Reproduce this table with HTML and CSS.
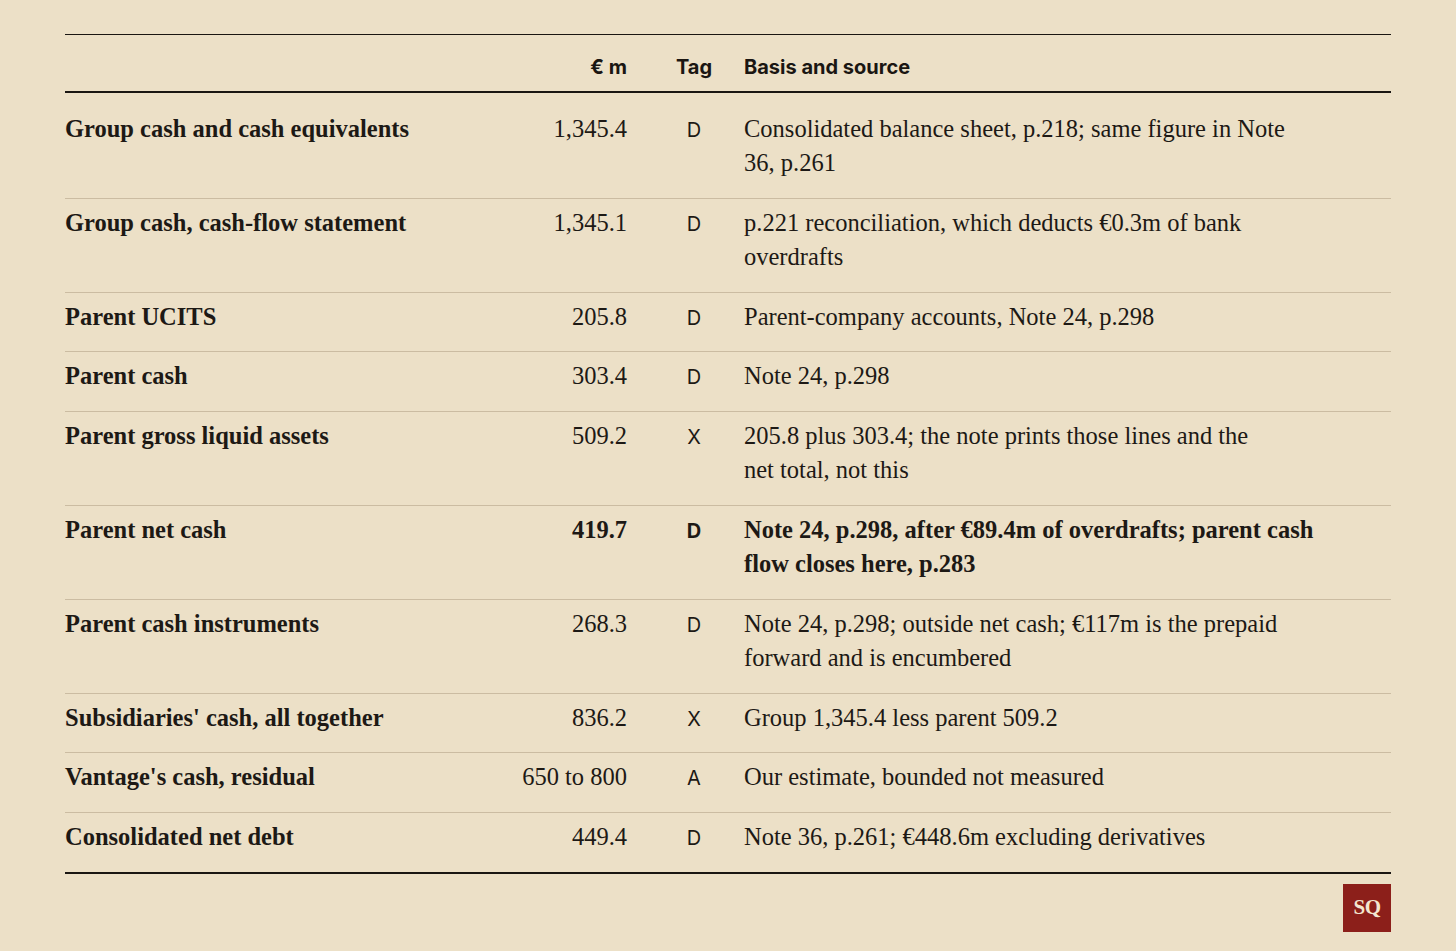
FILE: index.html
```html
<!DOCTYPE html>
<html lang="en">
<head>
<meta charset="utf-8">
<title>Cash ledger</title>
<link rel="stylesheet" href="styles.css">
</head>
<body>
<div class="page">
  <table class="ledger">
    <colgroup>
      <col class="c-label">
      <col class="c-amt">
      <col class="c-tag">
      <col class="c-basis">
    </colgroup>
    <thead>
      <tr>
        <th class="label"></th>
        <th class="amt">€ m</th>
        <th class="tag">Tag</th>
        <th class="basis">Basis and source</th>
      </tr>
    </thead>
    <tbody>
      <tr>
        <td class="label">Group cash and cash equivalents</td>
        <td class="amt">1,345.4</td>
        <td class="tag">D</td>
        <td class="basis">Consolidated balance sheet, p.218; same figure in Note<br>36, p.261</td>
      </tr>
      <tr>
        <td class="label">Group cash, cash-flow statement</td>
        <td class="amt">1,345.1</td>
        <td class="tag">D</td>
        <td class="basis">p.221 reconciliation, which deducts €0.3m of bank<br>overdrafts</td>
      </tr>
      <tr>
        <td class="label">Parent UCITS</td>
        <td class="amt">205.8</td>
        <td class="tag">D</td>
        <td class="basis">Parent-company accounts, Note 24, p.298</td>
      </tr>
      <tr>
        <td class="label">Parent cash</td>
        <td class="amt">303.4</td>
        <td class="tag">D</td>
        <td class="basis">Note 24, p.298</td>
      </tr>
      <tr>
        <td class="label">Parent gross liquid assets</td>
        <td class="amt">509.2</td>
        <td class="tag">X</td>
        <td class="basis">205.8 plus 303.4; the note prints those lines and the<br>net total, not this</td>
      </tr>
      <tr class="key">
        <td class="label">Parent net cash</td>
        <td class="amt">419.7</td>
        <td class="tag">D</td>
        <td class="basis">Note 24, p.298, after €89.4m of overdrafts; parent cash<br>flow closes here, p.283</td>
      </tr>
      <tr>
        <td class="label">Parent cash instruments</td>
        <td class="amt">268.3</td>
        <td class="tag">D</td>
        <td class="basis">Note 24, p.298; outside net cash; €117m is the prepaid<br>forward and is encumbered</td>
      </tr>
      <tr>
        <td class="label">Subsidiaries' cash, all together</td>
        <td class="amt">836.2</td>
        <td class="tag">X</td>
        <td class="basis">Group 1,345.4 less parent 509.2</td>
      </tr>
      <tr>
        <td class="label">Vantage's cash, residual</td>
        <td class="amt">650 to 800</td>
        <td class="tag">A</td>
        <td class="basis">Our estimate, bounded not measured</td>
      </tr>
      <tr>
        <td class="label">Consolidated net debt</td>
        <td class="amt">449.4</td>
        <td class="tag">D</td>
        <td class="basis">Note 36, p.261; €448.6m excluding derivatives</td>
      </tr>
    </tbody>
  </table>
  <div class="footer">
    <span class="badge">SQ</span>
  </div>
</div>
</body>
</html>
```

FILE: styles.css
```css
html, body {
  margin: 0;
  padding: 0;
  background: #ece0c7;
  color: #1d1915;
}

.page {
  padding: 34px 65px 0;
}

.ledger {
  width: 100%;
  table-layout: fixed;
  border-collapse: separate;
  border-spacing: 0;
}

.c-label { width: 412px; }
.c-amt { width: 150px; }
.c-tag { width: 117px; }
.c-basis { width: auto; }

.ledger th {
  font-family: Inter, "Liberation Sans", sans-serif;
  font-weight: 700;
  font-size: 20px;
  line-height: 24px;
  text-align: left;
  padding: 20px 0 12px;
  border-top: 1px solid #1a1612;
  border-bottom: 2px solid #1a1612;
  color: #1a1612;
}

.ledger td {
  font-family: "Liberation Serif", "Times New Roman", serif;
  font-size: 24.5px;
  line-height: 34px;
  padding: 7px 0 17.8px;
  vertical-align: baseline;
  border-top: 1px solid #cbbca2;
}

.ledger tbody tr:first-child td {
  border-top: none;
  padding-top: 19px;
}

.ledger tbody tr:last-child td {
  border-bottom: 2px solid #1a1612;
}

.ledger .label {
  font-weight: 700;
}

.ledger .amt {
  text-align: right;
}

.ledger .tag {
  text-align: center;
  padding-left: 33px;
  padding-right: 16px;
}

.ledger td.tag {
  font-family: Inter, "Liberation Sans", sans-serif;
  font-size: 20px;
  line-height: 32px;
}

.ledger .key td {
  font-weight: 700;
}

.footer {
  display: flex;
  justify-content: flex-end;
  padding-top: 10px;
}

.badge {
  display: flex;
  align-items: center;
  justify-content: center;
  width: 48px;
  height: 48px;
  background: #8c1f1a;
  color: #f3e6cf;
  font-family: "Liberation Serif", "Times New Roman", serif;
  font-weight: 700;
  font-size: 21px;
  letter-spacing: -0.5px;
}
```
